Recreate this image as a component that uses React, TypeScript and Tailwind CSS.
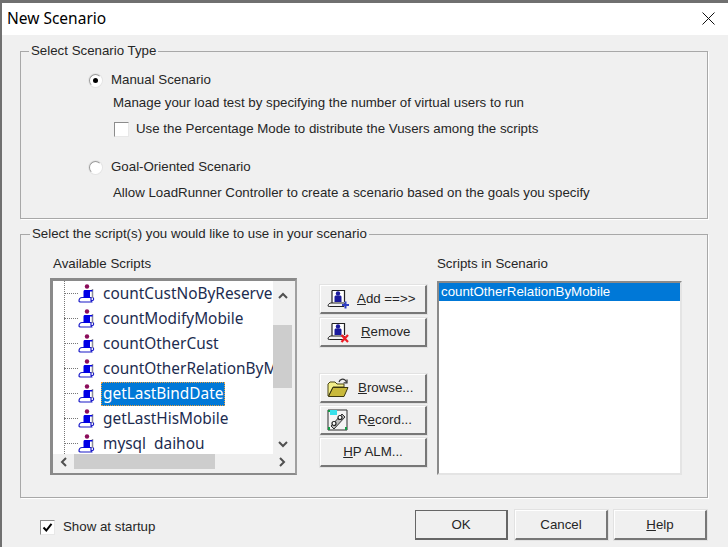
import React from 'react';

const ui = "font-['Liberation_Sans',Arial,sans-serif] text-[13.3px] text-[#262626]";

const ScriptIcon = () => (
  <svg width="18" height="21" viewBox="0 0 18 21" className="shrink-0">
    <path d="M1.500 17.500h13c1.500 0 1.500-3 0-3h-1" fill="#fff" stroke="#1b1bc8" strokeWidth="1.200" />
    <path d="M1 18c0-2 1.500-3.500 3-3.500h9v3c0 1 .5 1.500 1.500 1.500H3c-1.300 0-2-.5-2-1z" fill="#fff" stroke="#1b1bc8" strokeWidth="1.200" />
    <path d="M14.500 6v9" stroke="#8a8a9a" strokeWidth="1.500" />
    <path d="M5.500 15V8.500c0-1 .7-1.500 1.500-1.500h4c1 0 3 0 3.500 0v1.500H12V15z" fill="#0000e6" />
    <circle cx="9" cy="3.500" r="2.200" fill="#8c0d5a" />
  </svg>
);

const ButtonScript = ({ mark }: { mark: 'add' | 'remove' }) => (
  <svg width="22" height="22" viewBox="0 0 22 22" className="shrink-0">
    <path d="M5 3h12v11H5z" fill="#fff" />
    <path d="M5 2.500h12.500V14M5 2.500V15" fill="none" stroke="#222" strokeWidth="1.200" />
    <path d="M1 18c0-2 2-3 3-3h13c1 0 1 3 0 3.500H3c-1 0-2 0-2-.5z" fill="#f4f4f4" stroke="#222" strokeWidth="1" />
    <path d="M7.500 14V9c0-1 .7-1.500 1.500-1.500h4c.8 0 1.500.5 1.500 1.500v5z" fill="#1a1a9c" />
    <circle cx="11" cy="5.500" r="2.200" fill="#1a1a9c" />
    {mark === 'add' ? (
      <path d="M18.500 13.500v7M15 17h7" stroke="#2f3fc4" strokeWidth="2" />
    ) : (
      <path d="M14.500 14l6.500 7M21 14l-6.500 7" stroke="#ee1c25" strokeWidth="2.200" />
    )}
  </svg>
);

const FolderIcon = () => (
  <svg width="22" height="22" viewBox="0 0 22 22" className="shrink-0">
    <path d="M12 5c1-3 4-3.500 6-2l1.500 2" fill="none" stroke="#333" strokeWidth="1.200" />
    <path d="M20 2.500v3.300h-3.400" fill="none" stroke="#333" strokeWidth="1.200" />
    <path d="M1 19V7l2-2h5l2 2h7v3H6L1.500 19z" fill="#f2ee8a" stroke="#4a4514" strokeWidth="1" />
    <path d="M1.500 19.500L6 10.500h15l-4 9z" fill="#c9b93a" stroke="#3c3810" strokeWidth="1" />
  </svg>
);

const RecordIcon = () => (
  <svg width="21" height="22" viewBox="0 0 21 22" className="shrink-0">
    <path d="M1 1h19v20H1z" fill="#f4f4f4" stroke="#2b2b2b" strokeWidth="1" />
    <path d="M3 1h7v5H3z" fill="#38e0ea" />
    <path d="M1 1h2v2H1zM18 18h2v3h-2zM1 18h2v3H1z" fill="#139a43" />
    <path d="M4 17L15 5l3 3L7 20z" fill="#bdbdbd" stroke="#333" strokeWidth="1" />
    <circle cx="13" cy="8.500" r="2" fill="#fff" stroke="#222" strokeWidth="1.200" />
    <circle cx="7" cy="14.500" r="2" fill="#fff" stroke="#222" strokeWidth="1.200" />
  </svg>
);

const Radio = ({ checked }: { checked?: boolean }) => (
  <span className="w-[13px] h-[13px] rounded-full bg-white border border-[#9a9a9a] border-r-white border-b-white shadow-[0_0_0_1px_#e4e4e4] flex items-center justify-center shrink-0">
    {checked && <span className="w-[5px] h-[5px] rounded-full bg-black" />}
  </span>
);

const Check = ({ checked }: { checked?: boolean }) => (
  <span className="w-[15px] h-[15px] bg-white border border-[#8c8c8c] border-r-[#e8e8e8] border-b-[#e8e8e8] flex items-center justify-center shrink-0">
    {checked && (
      <svg width="11" height="11" viewBox="0 0 11 11">
        <path d="M1.500 5.500l2.800 3L9.500 1.800" fill="none" stroke="#000" strokeWidth="2" />
      </svg>
    )}
  </span>
);

const Bevel = ({ children, className = '' }: { children: React.ReactNode; className?: string }) => (
  <button className={`h-[29px] w-[107px] bg-[#f0f0f0] border-t border-l border-white border-r-2 border-b-2 border-r-[#777] border-b-[#777] shadow-[0_0_0_1px_#e2e2e2] flex items-center ${ui} ${className}`}>
    {children}
  </button>
);

const Chevron = ({ d }: { d: string }) => (
  <svg width="10" height="10" viewBox="0 0 10 10">
    <path d={d} fill="none" stroke="#505050" strokeWidth="2" />
  </svg>
);

const scripts = [
  'countCustNoByReserve',
  'countModifyMobile',
  'countOtherCust',
  'countOtherRelationByMobile',
  'getLastBindDate',
  'getLastHisMobile',
  'mysql daihou',
];

const TreeRow = ({ name }: { name: string }) => {
  const selected = name === 'getLastBindDate';
  return (
    <div className="h-[25px] flex items-center shrink-0">
      <span className="w-[14px] ml-[11px] border-t border-dotted border-[#777] shrink-0" />
      <span className="w-[23px] shrink-0"><ScriptIcon /></span>
      <span
        className={`h-[24px] flex items-center px-[2px] pt-[1px] whitespace-nowrap font-['Noto_Sans',sans-serif] text-[15.4px] [word-spacing:4px] ${
          selected ? 'bg-[#0078d7] text-white outline-1 outline-dotted outline-[#e8a040] -outline-offset-1' : 'text-[#1c2c50]'
        }`}
      >
        {name}
      </span>
    </div>
  );
};

export default function App() {
  return (
    <div className={`w-[728px] h-[547px] overflow-hidden bg-[#f0f0f0] border-t-[3px] border-l-2 border-[#707070] flex flex-col ${ui}`}>
      <div className="h-[32px] bg-white flex items-center justify-between pl-[5px] pr-[13px] pb-[1px] shrink-0">
        <span className="font-['Noto_Sans',sans-serif] text-[15.5px] text-black">New Scenario</span>
        <svg width="13" height="13" viewBox="0 0 13 13">
          <path d="M.5.500l12 12M12.500.500l-12 12" stroke="#111" strokeWidth="1" />
        </svg>
      </div>

      <div className="flex flex-col pl-[18px] pr-[20px] pt-[8px]">
        <fieldset className="h-[176px] border border-[#a8a8a8] shadow-[1px_1px_0_#fff]">
          <legend className="ml-[8px] px-[2px] leading-[16px]">Select Scenario Type</legend>
          <div className="pl-[68px]">
            <div className="flex items-center gap-[9px] mt-[13px] h-[16px]">
              <Radio checked />
              <span>Manual Scenario</span>
            </div>
            <p className="ml-[24px] mt-[7px] leading-[16px]">Manage your load test by specifying the number of virtual users to run</p>
            <div className="ml-[25px] mt-[10px] h-[16px] flex items-center gap-[7px]">
              <Check />
              <span>Use the Percentage Mode to distribute the Vusers among the scripts</span>
            </div>
            <div className="flex items-center gap-[9px] mt-[22px] h-[16px]">
              <Radio />
              <span>Goal-Oriented Scenario</span>
            </div>
            <p className="ml-[24px] mt-[10px] leading-[16px]">Allow LoadRunner Controller to create a scenario based on the goals you specify</p>
          </div>
        </fieldset>

        <fieldset className="mt-[7px] h-[272px] border border-[#a8a8a8] shadow-[1px_1px_0_#fff]">
          <legend className="ml-[9px] px-[2px] leading-[16px]">Select the script(s) you would like to use in your scenario</legend>
          <div className="flex gap-[23px] pl-[29px]">
            <div className="w-[247px]">
              <div className="leading-[16px] ml-[3px] mt-[14px]">Available Scripts</div>
              <div className="mt-[6px] w-[247px] h-[197px] border-[3px] border-[#8a8a8a] border-r-2 border-b-2 border-r-[#a0a0a0] border-b-[#8a8a8a] bg-[#f0f0f0] pr-[3px] pb-[4px]">
                <div className="flex flex-col h-full">
                  <div className="flex h-[173px]">
                    <div className="w-[220px] bg-white overflow-hidden relative">
                      <span className="absolute left-[11px] top-0 bottom-0 border-l border-dotted border-[#777]" />
                      {scripts.map((s) => (
                        <TreeRow key={s} name={s} />
                      ))}
                    </div>
                    <div className="w-[19px] bg-[#f0f0f0] flex flex-col">
                      <div className="h-[28px] flex items-center justify-center pt-[2px]"><Chevron d="M1 7l4-4 4 4" /></div>
                      <div className="h-[16px]" />
                      <div className="h-[63px] bg-[#cdcdcd]" />
                      <div className="flex-1 flex items-end justify-center pb-[5px]"><Chevron d="M1 3l4 4 4-4" /></div>
                    </div>
                  </div>
                  <div className="h-[18px] w-[239px] flex items-center">
                    <div className="w-[21px] flex justify-center"><Chevron d="M7 1L3 5l4 4" /></div>
                    <div className="w-[141px] h-full bg-[#cdcdcd]" />
                    <div className="flex-1 flex justify-end pr-[5px]"><Chevron d="M3 1l4 4-4 4" /></div>
                  </div>
                </div>
              </div>
            </div>

            <div className="w-[107px] flex flex-col mt-[43px]">
              <Bevel className="pl-[6px] gap-[8px]"><ButtonScript mark="add" /><span><u>A</u>dd ==&gt;&gt;</span></Bevel>
              <Bevel className="mt-[4px] pl-[6px] gap-[12px]"><ButtonScript mark="remove" /><span><u>R</u>emove</span></Bevel>
              <Bevel className="mt-[27px] pl-[6px] gap-[9px]"><FolderIcon /><span><u>B</u>rowse...</span></Bevel>
              <Bevel className="mt-[3px] pl-[6px] gap-[10px]"><RecordIcon /><span>R<u>e</u>cord...</span></Bevel>
              <Bevel className="mt-[3px] justify-center"><span><u>H</u>P ALM...</span></Bevel>
            </div>

            <div className="ml-[-13px] w-[245px]">
              <div className="leading-[16px] mt-[14px]">Scripts in Scenario</div>
              <div className="mt-[9px] h-[194px] bg-white border-2 border-[#8a8a8a] border-r-[#e4e4e4] border-b-[#e4e4e4]">
                <div className="h-[18px] bg-[#0078d7] text-white pl-[2px] leading-[18px] whitespace-nowrap">countOtherRelationByMobile</div>
              </div>
            </div>
          </div>
        </fieldset>

        <div className="mt-[12px] flex items-center">
          <div className="ml-[20px] flex items-center gap-[8px] mt-[4px]">
            <Check checked />
            <span>Show at startup</span>
          </div>
          <div className="ml-auto mr-[1px] flex">
            <button className="w-[93px] h-[30px] bg-[#f0f0f0] border border-[#666] border-r-2 border-b-2 flex items-center justify-center"><span>OK</span></button>
            <Bevel className="ml-[7px] !w-[93px] !h-[30px] justify-center"><span>Cancel</span></Bevel>
            <Bevel className="ml-[6px] !w-[93px] !h-[30px] justify-center"><span><u>H</u>elp</span></Bevel>
          </div>
        </div>
      </div>
    </div>
  );
}
